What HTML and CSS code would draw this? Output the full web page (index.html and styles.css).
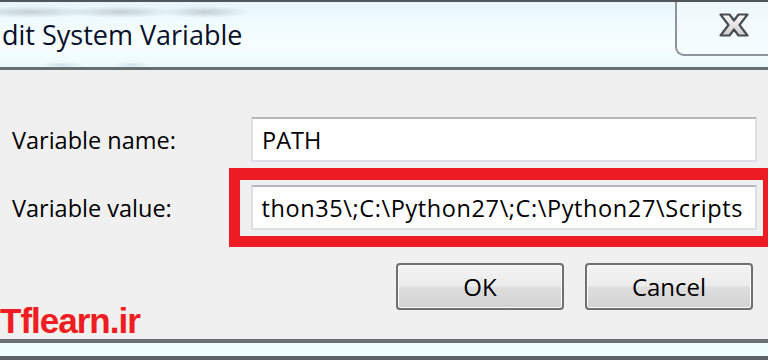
FILE: index.html
```html
<!DOCTYPE html>
<html lang="en">
<head>
<meta charset="utf-8">
<title>Edit System Variable</title>
<link rel="stylesheet" href="styles.css">
</head>
<body>
<div class="window">
  <header class="titlebar">
    <h1 class="title">dit System Variable</h1>
    <div class="close">
      <svg class="close-x" width="30" height="24" viewBox="0 0 30 24" aria-hidden="true">
        <defs>
          <linearGradient id="xg" x1="0" y1="0" x2="0" y2="1">
            <stop offset="0" stop-color="#f8f8f8"/>
            <stop offset="1" stop-color="#cfcfcf"/>
          </linearGradient>
        </defs>
        <polygon points="1.5,1.5 10.5,1.5 15,7.5 19.5,1.5 28.5,1.5 20.5,12 28.5,22.5 19.5,22.5 15,16.5 10.5,22.5 1.5,22.5 9.5,12" fill="url(#xg)" stroke="#4a4d52" stroke-width="2.2" stroke-linejoin="round"/>
      </svg>
    </div>
  </header>
  <main class="content">
    <div class="form">
      <label class="label">Variable name:</label>
      <div class="field"><span class="field-text">PATH</span></div>
      <label class="label">Variable value:</label>
      <div class="field field-scroll"><span class="field-text field-value">thon35\;C:\Python27\;C:\Python27\Scripts</span></div>
    </div>
    <div class="footer">
      <span class="brand">Tflearn.ir</span>
      <div class="buttons">
        <button class="btn">OK</button>
        <button class="btn">Cancel</button>
      </div>
    </div>
    <div class="highlight"></div>
  </main>
  <footer class="bottom-edge"></footer>
</div>
</body>
</html>
```

FILE: styles.css
```css
html, body {
  margin: 0;
  padding: 0;
}
body {
  width: 768px;
  height: 360px;
  overflow: hidden;
  background: #f0f0f0;
  font-family: "Open Sans", "Noto Sans", sans-serif;
  color: #000;
}
.window {
  width: 768px;
  height: 360px;
  overflow: hidden;
  display: flex;
  flex-direction: column;
}
.titlebar {
  height: 65px;
  border-top: 2px solid #4f565c;
  border-bottom: 3px solid #686d70;
  display: flex;
  align-items: flex-start;
  background:
    radial-gradient(ellipse 60px 6px at 30px 10px, rgba(120,130,140,0.35), rgba(120,130,140,0) 100%),
    radial-gradient(ellipse 55px 6px at 120px 10px, rgba(120,130,140,0.35), rgba(120,130,140,0) 100%),
    radial-gradient(ellipse 45px 6px at 205px 10px, rgba(120,130,140,0.35), rgba(120,130,140,0) 100%),
    radial-gradient(ellipse 22px 3px at 62px 63px, rgba(120,150,170,0.25), rgba(120,150,170,0) 100%),
    radial-gradient(ellipse 18px 3px at 132px 63px, rgba(120,150,170,0.25), rgba(120,150,170,0) 100%),
    linear-gradient(180deg, #e6f5fa 0%, #f1fcff 35%, #f7feff 70%, #ecf9fc 100%);
}
.title {
  margin: 18px 0 0 2px;
  font-size: 27px;
  line-height: 30px;
  font-weight: 400;
  color: #0a0f2a;
  white-space: nowrap;
}
.close {
  margin-left: auto;
  width: 49px;
  height: 41px;
  border-left: 2px solid #8d949a;
  border-bottom: 2px solid #8d949a;
  border-bottom-left-radius: 9px;
  padding: 11px 0 0 42px;
  box-sizing: content-box;
  background: linear-gradient(180deg, #eef8fb, #f6fdff);
  flex-shrink: 0;
}
.close-x {
  display: block;
}
.content {
  position: relative;
  height: 269px;
  background: #f0f0f0;
  display: flex;
  flex-direction: column;
}
.form {
  display: grid;
  grid-template-columns: 239px 506px;
  grid-auto-rows: 45px;
  row-gap: 23px;
  padding: 47px 0 0 12px;
  align-items: center;
}
.label {
  font-size: 23.5px;
  white-space: nowrap;
}
.field {
  height: 45px;
  box-sizing: border-box;
  background: #fff;
  border: 2px solid #dcdfe3;
  border-top-color: #b4b7bb;
  padding: 0 12px 0 9px;
  display: flex;
  align-items: center;
  overflow: hidden;
}
.field-text {
  font-size: 23.5px;
  white-space: nowrap;
}
.field-value {
  letter-spacing: 0.6px;
}
.field-scroll {
  justify-content: flex-end;
}
.footer {
  margin-top: 33px;
  height: 76px;
  display: flex;
  justify-content: space-between;
  align-items: flex-start;
}
.brand {
  align-self: flex-end;
  margin: 0 0 1px 0;
  font-family: "Liberation Sans", Arial, sans-serif;
  font-weight: 700;
  font-size: 35px;
  line-height: 34px;
  letter-spacing: -1px;
  color: #ee1c25;
  text-shadow: 0 0 1px rgba(255, 220, 140, 0.7);
}
.buttons {
  display: flex;
  gap: 21px;
  padding-right: 15px;
}
.btn {
  width: 168px;
  height: 47px;
  box-sizing: border-box;
  border: 2px solid #707070;
  border-radius: 4px;
  background: linear-gradient(180deg, #f3f3f3 0%, #ececec 48%, #dedede 52%, #d2d2d2 100%);
  box-shadow: inset 0 0 0 1px #fbfbfb;
  font-family: "Open Sans", "Noto Sans", sans-serif;
  font-size: 24px;
  color: #000;
  padding: 0;
}
.highlight {
  position: absolute;
  left: 229px;
  top: 98px;
  width: 545px;
  height: 79px;
  box-sizing: border-box;
  border: 11px solid #ed1c24;
  border-top-width: 12px;
  pointer-events: none;
}
.bottom-edge {
  height: 13px;
  border-top: 4px solid #6c7073;
  border-bottom: 4px solid #5c6266;
  background: #effdfd;
}
```
